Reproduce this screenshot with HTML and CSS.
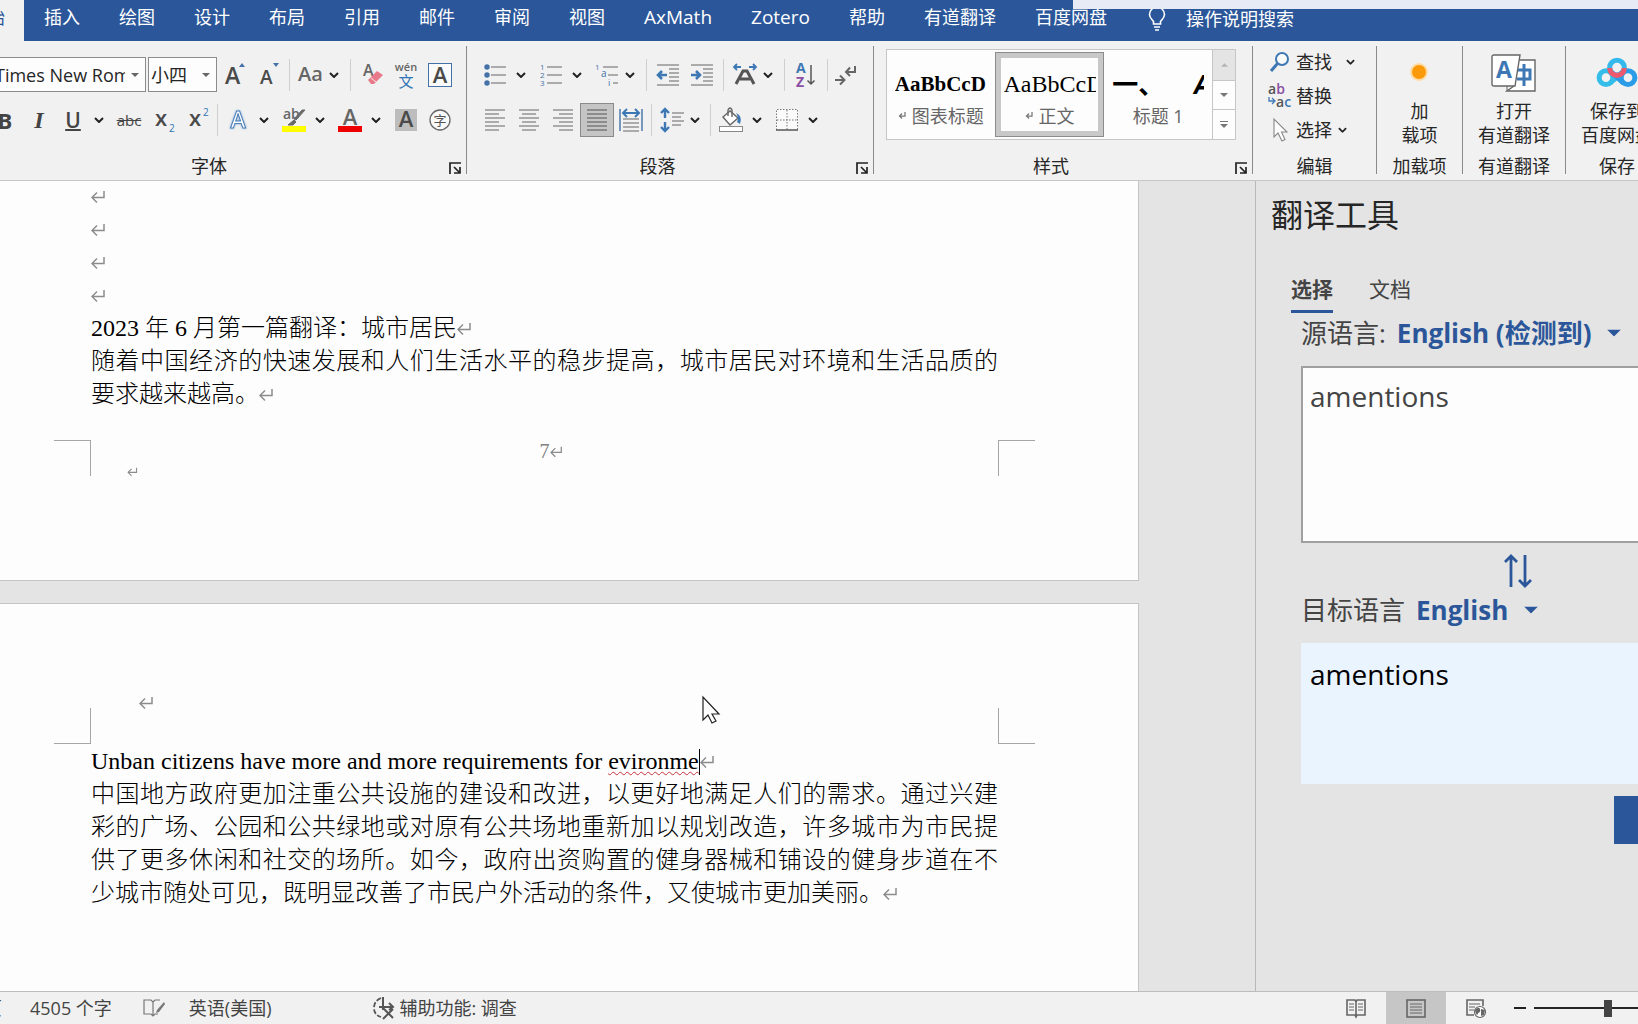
FILE: index.html
```html
<!DOCTYPE html>
<html lang="zh-CN">
<head>
<meta charset="utf-8">
<title>Word</title>
<link rel="stylesheet" href="styles.css">
</head>
<body>
<svg class="defs" aria-hidden="true">
  <symbol id="caret" viewBox="0 0 10 6"><path d="M1 1l4 4 4-4" fill="none" stroke="#222" stroke-width="2"/></symbol>
  <symbol id="tri" viewBox="0 0 8 4"><path d="M0 0h8L4 4z" fill="currentColor"/></symbol>
  <symbol id="ret" viewBox="0 0 16 14"><path d="M13 1v6.500H1M6 2.500L1 7.500 6 12.500" fill="none" stroke="#8c8c8c" stroke-width="1.500"/></symbol>
  <symbol id="launch" viewBox="0 0 12 12"><path d="M1 12V1h11M5 5l6 6M11 5v6H5" fill="none" stroke="#222" stroke-width="1.700"/></symbol>
</svg>

<header class="titlebar">
  <nav class="tabs">
    <a class="tab active" href="#">开始</a>
    <a class="tab" href="#">插入</a>
    <a class="tab" href="#">绘图</a>
    <a class="tab" href="#">设计</a>
    <a class="tab" href="#">布局</a>
    <a class="tab" href="#">引用</a>
    <a class="tab" href="#">邮件</a>
    <a class="tab" href="#">审阅</a>
    <a class="tab" href="#">视图</a>
    <a class="tab latin" href="#">AxMath</a>
    <a class="tab latin" href="#">Zotero</a>
    <a class="tab" href="#">帮助</a>
    <a class="tab" href="#">有道翻译</a>
    <a class="tab" href="#">百度网盘</a>
    <button class="tell-me" type="button">
      <svg width="18" height="24" viewBox="0 0 18 24"><path d="M5.500 17v-2.500C4 12.500 1.500 11 1.500 7.500a7.500 7.500 0 0 1 15 0c0 3.500-2.500 5-4 7V17zM6 20h6M7 23h4" fill="none" stroke="#fff" stroke-width="1.600"/></svg>
      <span>操作说明搜索</span>
    </button>
  </nav>
  <div class="overlay-strip"></div>
</header>

<section class="ribbon" aria-label="开始">
  <div class="group font-group">
    <div class="row row-top airy">
      <span class="combo font-name"><select aria-label="字体"><option>Times New Roman</option></select><svg class="tri" width="8" height="4"><use href="#tri"/></svg></span>
      <span class="combo font-size"><select aria-label="字号"><option>小四</option></select><svg class="tri" width="8" height="4"><use href="#tri"/></svg></span>
      <button class="tool" aria-label="增大字号"><svg width="26" height="24" viewBox="0 0 26 24"><text x="4" y="21" class="glyph" font-size="23">A</text><path d="M18 4l3-4 3 4z" fill="#4472a8"/></svg></button>
      <button class="tool" aria-label="减小字号"><svg width="26" height="24" viewBox="0 0 26 24"><text x="5" y="21" class="glyph" font-size="19">A</text><path d="M18 0h6l-3 4z" fill="#4472a8"/></svg></button>
      <span class="sep"></span>
      <button class="tool" aria-label="更改大小写"><svg width="28" height="24" viewBox="0 0 28 24"><text x="1" y="18" class="glyph soft" font-size="20">Aa</text></svg></button>
      <button class="drop tight" aria-label="更多"><svg width="10" height="6"><use href="#caret"/></svg></button>
      <span class="sep"></span>
      <button class="tool" aria-label="清除格式"><svg width="24" height="24" viewBox="0 0 24 24"><text x="3" y="13" class="glyph soft" font-size="16">A</text><path d="M8 17l9-9 6 4-9 9-3 0z" fill="#e8798a"/><path d="M10.500 14.500l5.500 4.500" stroke="#f1f1f1"/></svg></button>
      <button class="tool" aria-label="拼音指南"><svg width="26" height="30" viewBox="0 0 26 30"><text x="13" y="11" text-anchor="middle" class="glyph soft" font-size="11">wén</text><text x="13" y="27" text-anchor="middle" font-size="15" fill="#2f74b5">文</text></svg></button>
      <button class="tool" aria-label="字符边框"><svg width="24" height="24" viewBox="0 0 24 24"><rect x="0.500" y="0.500" width="23" height="23" fill="#fafafa" stroke="#4472a8"/><text x="12" y="20" text-anchor="middle" class="glyph" font-size="22">A</text></svg></button>
    </div>
    <div class="row row-bottom">
      <button class="tool bold" aria-label="加粗">B</button>
      <button class="tool italic" aria-label="倾斜">I</button>
      <button class="tool under" aria-label="下划线">U</button>
      <button class="drop" aria-label="更多"><svg width="10" height="6"><use href="#caret"/></svg></button>
      <button class="tool strike" aria-label="删除线">abc</button>
      <button class="tool" aria-label="下标"><svg width="24" height="28" viewBox="0 0 24 28"><text x="4" y="20" class="glyph" font-size="22">x</text><text x="18" y="26" font-size="10" fill="#2f74b5">2</text></svg></button>
      <button class="tool" aria-label="上标"><svg width="24" height="28" viewBox="0 0 24 28"><text x="4" y="20" class="glyph" font-size="22">x</text><text x="18" y="10" font-size="10" fill="#2f74b5">2</text></svg></button>
      <span class="sep"></span>
      <button class="tool" aria-label="文本效果"><svg width="24" height="26" viewBox="0 0 24 26"><text x="12" y="21" text-anchor="middle" font-size="23" font-weight="600" fill="#fff" stroke="#4a7fb8" class="glow">A</text></svg></button>
      <button class="drop" aria-label="更多"><svg width="10" height="6"><use href="#caret"/></svg></button>
      <button class="tool" aria-label="突出显示"><svg width="24" height="26" viewBox="0 0 24 26"><text x="1" y="12" class="glyph soft" font-size="14">ab</text><path d="M23 3l-9 10-2-1 8-9zM12 13l2 2-3 3H6z" fill="#6a6a6a" stroke="#6a6a6a"/><rect y="19" width="24" height="6" fill="#ffff00"/></svg></button>
      <button class="drop" aria-label="更多"><svg width="10" height="6"><use href="#caret"/></svg></button>
      <button class="tool" aria-label="字体颜色"><svg width="24" height="26" viewBox="0 0 24 26"><text x="12" y="18" text-anchor="middle" class="glyph soft" font-size="22">A</text><rect y="19" width="24" height="6" fill="#ee0000"/></svg></button>
      <button class="drop" aria-label="更多"><svg width="10" height="6"><use href="#caret"/></svg></button>
      <button class="tool" aria-label="字符底纹"><svg width="22" height="22" viewBox="0 0 22 22"><rect width="22" height="22" fill="#bdbdbd"/><text x="11" y="18" text-anchor="middle" class="glyph" font-size="22">A</text></svg></button>
      <button class="tool" aria-label="带圈字符"><svg width="22" height="22" viewBox="0 0 22 22"><circle cx="11" cy="11" r="10" fill="#fafafa" stroke="#666" stroke-width="1.300"/><text x="11" y="16" text-anchor="middle" font-size="13" fill="#555">字</text></svg></button>
    </div>
    <div class="group-foot"><span>字体</span><button class="launcher" aria-label="字体设置"><svg width="12" height="12"><use href="#launch"/></svg></button></div>
  </div>

  <div class="group para-group">
    <div class="row row-top airy">
      <button class="tool" aria-label="项目符号"><svg width="24" height="24" viewBox="0 0 24 24"><g fill="#4472a8"><circle cx="4" cy="4" r="2.700"/><circle cx="4" cy="12" r="2.700"/><circle cx="4" cy="20" r="2.700"/></g><path d="M8 4h15M8 12h15M8 20h15" stroke="#666" stroke-width="1.200"/></svg></button>
      <button class="drop" aria-label="更多"><svg width="10" height="6"><use href="#caret"/></svg></button>
      <button class="tool" aria-label="编号"><svg width="24" height="24" viewBox="0 0 24 24"><g fill="#4472a8" font-size="8"><text x="1" y="7">1</text><text x="1" y="15">2</text><text x="1" y="23">3</text></g><path d="M8 4h15M8 12h15M8 20h15" stroke="#666" stroke-width="1.200"/></svg></button>
      <button class="drop" aria-label="更多"><svg width="10" height="6"><use href="#caret"/></svg></button>
      <button class="tool" aria-label="多级列表"><svg width="24" height="24" viewBox="0 0 24 24"><g fill="#4472a8" font-size="8"><text x="0" y="7">1</text><text x="6" y="14" font-size="10">a</text><text x="13" y="23" font-size="9">i</text></g><path d="M8 4h15M13 12h10M18 20h5" stroke="#666" stroke-width="1.200"/></svg></button>
      <button class="drop tight" aria-label="更多"><svg width="10" height="6"><use href="#caret"/></svg></button>
      <span class="sep"></span>
      <button class="tool" aria-label="减少缩进"><svg width="24" height="24" viewBox="0 0 24 24"><path d="M1 2h22M13 6h10M13 10h10M13 14h10M13 18h10M1 22h22" stroke="#666" stroke-width="1.200"/><path d="M11 12H2M6 8l-4 4 4 4" fill="none" stroke="#3e78b4" stroke-width="2.600"/></svg></button>
      <button class="tool" aria-label="增加缩进"><svg width="24" height="24" viewBox="0 0 24 24"><path d="M1 2h22M13 6h10M13 10h10M13 14h10M13 18h10M1 22h22" stroke="#666" stroke-width="1.200"/><path d="M1 12h9M6 8l4 4-4 4" fill="none" stroke="#3e78b4" stroke-width="2.600"/></svg></button>
      <span class="sep"></span>
      <button class="tool" aria-label="中文版式"><svg width="24" height="24" viewBox="0 0 24 24"><path d="M8 4H2M4 1L1 4l3 3M16 4h6M20 1l3 3-3 3" fill="none" stroke="#3e78b4" stroke-width="1.800"/><path d="M3 21L10 8h4l7 13M7 16h10" fill="none" stroke="#555" stroke-width="3"/></svg></button>
      <button class="drop tight" aria-label="更多"><svg width="10" height="6"><use href="#caret"/></svg></button>
      <span class="sep"></span>
      <button class="tool" aria-label="排序"><svg width="24" height="28" viewBox="0 0 24 28"><text x="2" y="12" font-size="14" font-weight="700" fill="#3e78b4">A</text><text x="2" y="26" font-size="14" font-weight="700" fill="#8a4fa3">Z</text><path d="M17 4v19M13.500 19.500L17 23l3.500-3.500" fill="none" stroke="#555" stroke-width="1.500"/></svg></button>
      <span class="sep"></span>
      <button class="tool" aria-label="显示编辑标记"><svg width="24" height="24" viewBox="0 0 24 24"><path d="M18 3v6H9M13 4.500L9 9l4 4M-2 17h9M3 12.500L7.500 17 3 21.500" fill="none" stroke="#666" stroke-width="2"/></svg></button>
    </div>
    <div class="row row-bottom">
      <button class="tool" aria-label="左对齐"><svg width="22" height="22" viewBox="0 0 22 22"><path d="M1 1h20M1 5h14M1 9h20M1 13h14M1 17h20M1 21h14" stroke="#666" stroke-width="1.200"/></svg></button>
      <button class="tool" aria-label="居中"><svg width="22" height="22" viewBox="0 0 22 22"><path d="M1 1h20M4 5h14M1 9h20M4 13h14M1 17h20M4 21h14" stroke="#666" stroke-width="1.200"/></svg></button>
      <button class="tool" aria-label="右对齐"><svg width="22" height="22" viewBox="0 0 22 22"><path d="M1 1h20M7 5h14M1 9h20M7 13h14M1 17h20M7 21h14" stroke="#666" stroke-width="1.200"/></svg></button>
      <button class="tool pressed" aria-label="两端对齐" aria-pressed="true"><svg width="22" height="22" viewBox="0 0 22 22"><path d="M1 1h20M1 5h20M1 9h20M1 13h20M1 17h20M1 21h20" stroke="#555" stroke-width="1.200"/></svg></button>
      <button class="tool" aria-label="分散对齐"><svg width="24" height="24" viewBox="0 0 24 24"><path d="M1 1v22M23 1v22" stroke="#4472a8" stroke-width="1.400"/><path d="M4 11h16M4 15h16M4 19h16M4 23h16" stroke="#666" stroke-width="1.200"/><path d="M4 5h16M8 1L4 5l4 4M16 1l4 4-4 4" fill="none" stroke="#3e78b4" stroke-width="2"/></svg></button>
      <span class="sep"></span>
      <button class="tool" aria-label="行距"><svg width="24" height="24" viewBox="0 0 24 24"><path d="M5 1v9M1 5l4-4 4 4M5 14v9M1 19l4 4 4-4" fill="none" stroke="#3e78b4" stroke-width="2.400"/><path d="M12 5h12M12 9h9M12 13h12M12 17h9" stroke="#666" stroke-width="1.200"/></svg></button>
      <button class="drop tight" aria-label="更多"><svg width="10" height="6"><use href="#caret"/></svg></button>
      <span class="sep"></span>
      <button class="tool" aria-label="底纹"><svg width="26" height="26" viewBox="0 0 26 26"><path d="M5 10l7-6 8 7-8 7z" fill="#fff" stroke="#666" stroke-width="1.400"/><path d="M10 9V3q2-4 4 0v7" fill="none" stroke="#666" stroke-width="1.400"/><path d="M18 6q7 3 4 11l-3-2q2-5-1-9z" fill="#3e78b4"/><rect x="1.500" y="19.500" width="23" height="5" fill="#fff" stroke="#888"/></svg></button>
      <button class="drop" aria-label="更多"><svg width="10" height="6"><use href="#caret"/></svg></button>
      <button class="tool" aria-label="边框"><svg width="22" height="22" viewBox="0 0 22 22"><rect width="22" height="22" fill="#fafafa"/><path d="M.5 21V.5h21V21M11 1v20M1 11h20" fill="none" stroke="#777" stroke-dasharray="1.500 1.500"/><path d="M0 21h22" stroke="#555" stroke-width="1.500"/></svg></button>
      <button class="drop" aria-label="更多"><svg width="10" height="6"><use href="#caret"/></svg></button>
    </div>
    <div class="group-foot"><span>段落</span><button class="launcher" aria-label="段落设置"><svg width="12" height="12"><use href="#launch"/></svg></button></div>
  </div>

  <div class="group style-group">
    <div class="gallery">
      <button class="style-card"><span class="preview caption">AaBbCcD</span><span class="style-name"><svg width="8" height="9" viewBox="0 0 16 14"><path d="M14 0v8H3M8 3L3 8l5 5" fill="none" stroke="#777" stroke-width="2.500"/></svg>图表标题</span></button>
      <button class="style-card selected"><span class="preview">AaBbCcD</span><span class="style-name"><svg width="8" height="9" viewBox="0 0 16 14"><path d="M14 0v8H3M8 3L3 8l5 5" fill="none" stroke="#777" stroke-width="2.500"/></svg>正文</span></button>
      <button class="style-card"><span class="preview heading"><span>一、</span><i>A</i></span><span class="style-name">标题 1</span></button>
      <div class="gallery-scroll">
        <button disabled aria-label="上一行"><svg width="7" height="4" viewBox="0 0 8 4"><path d="M0 4h8L4 0z" fill="#b5b5b5"/></svg></button>
        <button aria-label="下一行"><svg width="8" height="4"><use href="#tri"/></svg></button>
        <button aria-label="其他"><svg width="8" height="8" viewBox="0 0 8 8"><path d="M0 .5h8" stroke="#777"/><path d="M0 3h8L4 7z" fill="#777"/></svg></button>
      </div>
    </div>
    <div class="group-foot"><span>样式</span><button class="launcher" aria-label="样式设置"><svg width="12" height="12"><use href="#launch"/></svg></button></div>
  </div>

  <div class="group edit-group">
    <div class="edit-list">
      <button><svg width="22" height="22" viewBox="0 0 22 22"><circle cx="13" cy="8" r="6" fill="#fafafa" stroke="#3e78b4" stroke-width="2"/><path d="M9 12l-7 8" stroke="#3e78b4" stroke-width="3"/></svg><span>查找</span><svg class="far" width="9" height="6" viewBox="0 0 10 6"><use href="#caret"/></svg></button>
      <button><svg width="24" height="26" viewBox="0 0 24 26"><text y="11" font-size="14" font-weight="600" fill="#555">a<tspan fill="#8a4fa3">b</tspan></text><text x="8" y="24" font-size="14" font-weight="600" fill="#555">a<tspan fill="#3e78b4">c</tspan></text><path d="M1 14v4h5M4 15l3 3-3 3" fill="none" stroke="#3e78b4" stroke-width="1.300"/></svg><span>替换</span></button>
      <button><svg width="22" height="24" viewBox="0 0 22 24"><path d="M5 1v18l4-4 4 8 3-1.500-3.500-7.500H18z" fill="#fdfdfd" stroke="#888" stroke-width="1.100"/></svg><span>选择</span><svg width="9" height="6" viewBox="0 0 10 6"><use href="#caret"/></svg></button>
    </div>
    <div class="group-foot"><span>编辑</span></div>
  </div>

  <div class="group addin-group">
    <button class="big"><svg width="48" height="40" viewBox="0 0 48 40"><circle cx="23" cy="18" r="9" fill="#ffdca6"/><circle cx="23" cy="18" r="7" fill="#fb9a09"/></svg><span>加<br>载项</span></button>
    <div class="group-foot"><span>加载项</span></div>
  </div>
  <div class="group youdao-group">
    <button class="big"><svg width="48" height="40" viewBox="0 0 48 40"><path d="M28 6h17v31H17l7-5" fill="#fff" stroke="#666" stroke-width="1.400"/><path d="M17 37v-5" stroke="#666"/><path d="M4 1h26l-5 31H4q-2 0-2-2V3q0-2 2-2z" fill="#fff" stroke="#666" stroke-width="1.400"/><text x="6" y="24" font-size="23" font-weight="700" fill="#3e78b4">A</text><path d="M34 10v22M28 16h12v9H27" fill="none" stroke="#3e78b4" stroke-width="3"/></svg><span>打开<br>有道翻译</span></button>
    <div class="group-foot"><span>有道翻译</span></div>
  </div>
  <div class="group baidu-group">
    <button class="big"><svg width="48" height="40" viewBox="0 0 48 40"><g fill="none" stroke-width="5.500"><circle cx="12" cy="24" r="7.500" stroke="#35bdea"/><circle cx="36" cy="24" r="7.500" stroke="#2a9ce8"/><path d="M17 29.500l14-12.500" stroke="#35bdea"/><path d="M17 17l14 13" stroke="#2a9ce8"/><circle cx="24" cy="13" r="8" stroke="#35b8ec"/><path d="M16 13.500a8 8 0 0 0 16 0" stroke="#ee5a6c"/></g></svg><span>保存到<br>百度网盘</span></button>
    <div class="group-foot"><span>保存</span></div>
  </div>
</section>

<main class="workspace">
  <div class="canvas">
    <article class="page page-end">
      <div class="body-text">
        <p><svg class="ret" width="16" height="14"><use href="#ret"/></svg></p>
        <p><svg class="ret" width="16" height="14"><use href="#ret"/></svg></p>
        <p><svg class="ret" width="16" height="14"><use href="#ret"/></svg></p>
        <p><svg class="ret" width="16" height="14"><use href="#ret"/></svg></p>
        <p>2023 年 6 月第一篇翻译：城市居民<svg class="ret" width="16" height="14"><use href="#ret"/></svg></p>
        <p class="full">随着中国经济的快速发展和人们生活水平的稳步提高，城市居民对环境和生活品质的</p>
        <p>要求越来越高。<svg class="ret" width="16" height="14"><use href="#ret"/></svg></p>
      </div>
      <footer class="margin-row">
        <span class="corner top-right"></span>
        <div class="foot-text">
          <p class="page-no">7<svg class="ret" width="14" height="12" viewBox="0 0 16 14"><use href="#ret"/></svg></p>
          <p class="foot-mark"><svg width="12" height="10" viewBox="0 0 16 14"><use href="#ret"/></svg></p>
        </div>
        <span class="corner top-left"></span>
      </footer>
    </article>
    <article class="page page-start">
      <header class="margin-row">
        <span class="corner bottom-right"></span>
        <p class="head-mark"><svg width="16" height="14"><use href="#ret"/></svg></p>
        <span class="corner bottom-left"></span>
      </header>
      <div class="body-text">
        <p>Unban citizens have more and more requirements for <span class="typo">evironme</span><span class="text-caret"></span><svg class="ret" width="16" height="14"><use href="#ret"/></svg></p>
        <p class="full">中国地方政府更加注重公共设施的建设和改进，以更好地满足人们的需求。通过兴建</p>
        <p class="full">彩的广场、公园和公共绿地或对原有公共场地重新加以规划改造，许多城市为市民提</p>
        <p class="full">供了更多休闲和社交的场所。如今，政府出资购置的健身器械和铺设的健身步道在不</p>
        <p>少城市随处可见，既明显改善了市民户外活动的条件，又使城市更加美丽。<svg class="ret" width="16" height="14"><use href="#ret"/></svg></p>
      </div>
    </article>
    <svg class="pointer" width="20" height="28" viewBox="0 0 20 28"><path d="M1 1v23l5-5 4 8 4-2-4-7h7z" fill="#fff" stroke="#222" stroke-width="1.200"/></svg>
  </div>

  <aside class="pane">
    <h2>翻译工具</h2>
    <div class="pane-tabs">
      <button class="pane-tab current">选择</button>
      <button class="pane-tab">文档</button>
    </div>
    <div class="pane-body">
      <div class="lang"><label for="src">源语言:</label><button class="lang-pick">English (检测到)<svg width="14" height="8" viewBox="0 0 8 4"><use href="#tri"/></svg></button></div>
      <textarea id="src">amentions</textarea>
      <button class="swap" aria-label="交换语言"><svg width="28" height="34" viewBox="0 0 28 34"><path d="M7 33V2M1 8l6-6 6 6M21 1v31M15 26l6 6 6-6" fill="none" stroke="#2b579a" stroke-width="2.800"/></svg></button>
      <div class="lang"><label for="dst">目标语言</label><button class="lang-pick">English<svg width="14" height="8" viewBox="0 0 8 4"><use href="#tri"/></svg></button></div>
      <output id="dst">amentions</output>
      <button class="insert" aria-label="插入"></button>
    </div>
  </aside>
</main>

<footer class="status">
  <div class="status-left">
    <span class="page-count">页</span>
    <span class="word-count">4505 个字</span>
    <svg class="proof" width="22" height="20" viewBox="0 0 22 20"><path d="M10 4L8 2H1v14h7l2 2 2-2h3M10 4v14M10 4l2-2h5" fill="none" stroke="#777" stroke-width="1.200"/><path d="M21 4l-7 8-1 3 3-1 6-8z" fill="#777"/></svg>
    <span class="language">英语(美国)</span>
    <svg width="22" height="24" viewBox="0 0 22 24"><path d="M8 2Q1 5 1 12t7 9" fill="none" stroke="#555" stroke-width="1.800" stroke-dasharray="5 2"/><path d="M6 11h14M10 1v13M16 7l4 4-4 3M9 11l11 11M20 13L10 23" fill="none" stroke="#555" stroke-width="2"/></svg>
    <span class="access">辅助功能: 调查</span>
  </div>
  <div class="status-right">
    <button aria-label="阅读视图"><svg width="20" height="19" viewBox="0 0 20 19"><path d="M10 3L9 1H1v15h8l1 2 1-2h8V1h-8zM10 3v15" fill="none" stroke="#666" stroke-width="1.600"/><path d="M3 5h5M3 8h5M3 11h5M12 5h5M12 8h5M12 11h5" stroke="#666"/></svg></button>
    <button class="on" aria-label="页面视图"><svg width="20" height="19" viewBox="0 0 20 19"><rect x="1" y="1" width="18" height="17" fill="none" stroke="#666" stroke-width="1.600"/><path d="M4 5h12M4 8h12M4 11h12M4 14h12" stroke="#666" stroke-width="1.200"/></svg></button>
    <button aria-label="Web 视图"><svg width="20" height="19" viewBox="0 0 20 19"><path d="M8 16H1V1h16v6" fill="none" stroke="#666" stroke-width="1.600"/><path d="M3 5h11M3 8h6M3 11h5" stroke="#666" stroke-width="1.200"/><circle cx="14" cy="13" r="5.500" fill="#fff" stroke="#666" stroke-width="1.200"/><path d="M9 11q4-4 5-1t-2 4q0 3-2 1zM15 10l4 1-1 5-3 1z" fill="#666"/></svg></button>
    <button class="zoom-out" aria-label="缩小"><svg width="12" height="2"><path d="M0 1h12" stroke="#222" stroke-width="2"/></svg></button>
    <input type="range" min="0" max="200" value="100" aria-label="缩放">
  </div>
</footer>
</body>
</html>
```

FILE: styles.css
```css
* {
  box-sizing: border-box;
}

body {
  margin: 0;
  height: 100vh;
  display: flex;
  flex-direction: column;
  overflow: hidden;
  background: #f1f1f1;
  color: #262626;
  font: 18px/24px "Open Sans", "Noto Sans CJK SC", sans-serif;
}

button {
  padding: 0;
  border: 0;
  background: none;
  color: inherit;
  font: inherit;
  white-space: nowrap;
}

p,
h2 {
  margin: 0;
}

svg {
  flex: none;
  overflow: visible;
}

.defs {
  position: absolute;
  width: 0;
  height: 0;
}

/* Ribbon tabs */
.titlebar {
  position: relative;
  flex: none;
  height: 41px;
  background: #2b579a;
}

.tabs {
  display: flex;
  gap: 39px;
  height: 100%;
  margin-left: -50px;
}

.tab {
  flex: none;
  padding-top: 5px;
  color: #fff;
  text-decoration: none;
}

.tab.active {
  margin-right: -19px;
  padding-left: 19px;
  padding-right: 19px;
  background: #f1f1f1;
  color: #2b579a;
}

.tab.latin {
  font-size: 19px;
}

.tell-me {
  display: flex;
  align-items: center;
  gap: 20px;
  padding: 0 2px 4px;
  color: #fff;
}

.overlay-strip {
  position: absolute;
  top: 0;
  right: 0;
  width: 565px;
  height: 9px;
  background: #e6ebf5;
}

/* Ribbon */
.ribbon {
  flex: none;
  display: flex;
  height: 140px;
  padding: 5px 0 6px;
  border-bottom: 1px solid #c6c6c6;
}

.group {
  flex: none;
  display: flex;
  flex-direction: column;
  border-right: 1px solid #8a8a8a;
}

.font-group {
  width: 487px;
  margin-left: -20px;
  padding-left: 8px;
}

.para-group {
  width: 407px;
  padding-left: 11px;
}

.style-group {
  width: 379px;
  padding-left: 12px;
}

.edit-group {
  width: 124px;
}

.addin-group {
  width: 86px;
}

.youdao-group,
.baidu-group {
  width: 103px;
}

.row {
  display: flex;
  align-items: center;
}

.row-top {
  height: 35px;
  margin: 11px 0;
}

.row-bottom {
  height: 34px;
}

.sep {
  flex: none;
  width: 1px;
  height: 32px;
  margin: 0 3px;
  background: #cfcfcf;
}

.airy .sep {
  margin: 0 4px;
}

.tool,
.drop {
  flex: none;
  display: flex;
  align-items: center;
  justify-content: center;
  width: 34px;
  height: 34px;
  color: #444;
}

.drop {
  width: 22px;
  padding-right: 4px;
}

.drop.tight {
  width: 18px;
  padding-right: 6px;
}

.pressed {
  border: 1px solid #8a8a8a;
  background: #c5c5c5;
}

.glyph {
  fill: #4a4a4a;
  font-weight: 600;
}

.glyph.soft {
  fill: #666;
}

.glow {
  filter: drop-shadow(0 0 1px #7fa9d6);
}

.bold {
  font-size: 22px;
  font-weight: 700;
}

.italic {
  font: italic 700 24px "Liberation Serif", serif;
}

.under {
  font-size: 21px;
  font-weight: 600;
  text-decoration: underline;
  text-decoration-thickness: 2px;
}

.strike {
  font-size: 15px;
  text-decoration: line-through;
}

.combo {
  position: relative;
  flex: none;
  height: 35px;
}

.combo select {
  width: 100%;
  height: 100%;
  padding: 0 20px 0 6px;
  border: 1px solid #8c8c8c;
  border-radius: 0;
  appearance: none;
  background: #fdfdfd;
  color: #262626;
  font: inherit;
  text-overflow: clip;
}

.combo .tri {
  position: absolute;
  top: 16px;
  right: 7px;
  color: #666;
}

.font-name {
  width: 158px;
}

.font-size {
  width: 69px;
  margin-left: 2px;
}

.font-size select {
  padding-left: 2px;
}

.group-foot {
  display: flex;
  align-items: center;
  height: 16px;
  margin-top: auto;
}

.group-foot span {
  flex: 1;
  text-align: center;
  white-space: nowrap;
}

.launcher {
  display: flex;
  justify-content: flex-end;
  width: 36px;
  padding: 4px 5px 0 0;
}

/* Style gallery */
.gallery {
  display: flex;
  width: 350px;
  height: 91px;
  margin-top: 3px;
  border: 1px solid #c6c6c6;
  background: #fdfdfd;
}

.style-card {
  flex: 1;
  display: flex;
  flex-direction: column;
  align-items: center;
  justify-content: center;
  gap: 4px;
  min-width: 0;
  margin: 2px 0;
  padding-top: 6px;
}

.style-card.selected {
  border: 1px solid #8c8c8c;
  outline: 5px solid #c8c8c8;
  outline-offset: -6px;
}

.preview {
  width: 92px;
  height: 32px;
  overflow: hidden;
  color: #000;
  font: 24px/32px "Liberation Serif", "Noto Sans CJK SC", serif;
  text-align: left;
}

.preview.caption {
  font-size: 21px;
  font-weight: 700;
}

.preview.heading {
  display: flex;
  gap: 30px;
  font: 700 26px/32px "Open Sans", "Noto Sans CJK SC", sans-serif;
}

.style-name {
  display: flex;
  align-items: center;
  gap: 6px;
  color: #666;
}

.gallery-scroll {
  display: grid;
  grid-template-rows: 1fr 1fr 1fr;
  width: 23px;
  border-left: 1px solid #c6c6c6;
}

.gallery-scroll button {
  display: flex;
  align-items: center;
  justify-content: center;
  color: #777;
}

.gallery-scroll button + button {
  border-top: 1px solid #c6c6c6;
}

.gallery-scroll button:disabled {
  background: #e4e4e4;
}

.edit-list {
  display: flex;
  flex-direction: column;
  gap: 10px;
  padding: 4px 0 0 15px;
}

.edit-list button {
  display: flex;
  align-items: center;
  height: 24px;
}

.edit-list span {
  margin: 0 6px 0 4px;
}

.edit-list svg:first-child {
  width: 24px;
}

.edit-list .far {
  margin-left: 8px;
}

.big {
  display: flex;
  flex-direction: column;
  align-items: center;
  gap: 5px;
  margin-top: 8px;
}

.baidu-group .big svg {
  width: 44px;
}

/* Document */
.workspace {
  flex: 1;
  display: flex;
  min-height: 0;
  background: #e4e4e4;
}

.canvas {
  position: relative;
  flex: 1;
  min-width: 0;
  overflow: hidden;
}

.page {
  width: 1139px;
  padding-left: 54px;
  border-right: 1px solid #c4c4c4;
  background: #fdfdfd;
}

.page-end {
  height: 400px;
  margin-bottom: 22px;
  border-bottom: 1px solid #c4c4c4;
}

.page-start {
  height: 400px;
  padding-top: 87px;
  border-top: 1px solid #c4c4c4;
}

.body-text {
  width: 907px;
  margin-top: -1px;
  margin-left: 37px;
  color: #000;
  font: 300 24px/33px "Liberation Serif", "Noto Sans CJK SC", serif;
}

.body-text p {
  height: 33px;
  white-space: nowrap;
}

.body-text .full {
  text-align: justify;
  text-align-last: justify;
  white-space: normal;
}

.ret {
  vertical-align: 0;
}

.typo {
  text-decoration: underline wavy #c8323c 1px;
  text-underline-offset: 2px;
}

.text-caret {
  display: inline-block;
  width: 1px;
  height: 26px;
  background: #000;
  vertical-align: -6px;
}

.margin-row {
  display: flex;
}

.page-end {
  display: flow-root;
}

.page-end .margin-row {
  padding-top: 29px;
}

.page-start .margin-row {
  padding-bottom: 2px;
}

.corner {
  flex: none;
  width: 37px;
  height: 36px;
}

.top-right {
  border-top: 1px solid #a6a6a6;
  border-right: 1px solid #a6a6a6;
}

.top-left {
  border-top: 1px solid #a6a6a6;
  border-left: 1px solid #a6a6a6;
}

.bottom-right {
  align-self: flex-end;
  border-bottom: 1px solid #a6a6a6;
  border-right: 1px solid #a6a6a6;
}

.bottom-left {
  align-self: flex-end;
  border-bottom: 1px solid #a6a6a6;
  border-left: 1px solid #a6a6a6;
}

.foot-text,
.head-mark {
  flex: none;
  width: 907px;
}

.page-no {
  padding-top: 1px;
  padding-left: 14px;
  color: #808080;
  font: 20px/20px "Liberation Serif", serif;
  text-align: center;
}

.foot-mark {
  padding-left: 36px;
  line-height: 18px;
}

.head-mark {
  height: 53px;
  padding-left: 48px;
}

.pointer {
  position: absolute;
  top: 515px;
  left: 702px;
}

/* Translator pane */
.pane {
  flex: none;
  width: 383px;
  padding: 12px 0 0 15px;
  overflow: hidden;
  border-left: 1px solid #b8b8b8;
}

.pane h2 {
  font-size: 32px;
  font-weight: 400;
  line-height: 44px;
}

.pane-tabs {
  display: flex;
  gap: 36px;
  margin: 37px 0 2px 20px;
  color: #444;
  font-size: 21px;
  line-height: 30px;
}

.pane-tab {
  padding-bottom: 6px;
  border-bottom: 3px solid transparent;
}

.pane-tab.current {
  border-color: #2b579a;
  font-weight: 700;
}

.pane-body {
  display: flex;
  flex-direction: column;
  width: 434px;
  margin-left: 30px;
}

.lang {
  display: flex;
  align-items: center;
  gap: 11px;
  height: 36px;
  color: #444;
  font-size: 26px;
}

.lang-pick {
  display: flex;
  align-items: center;
  gap: 16px;
  color: #2b579a;
  font-weight: 700;
}

.pane-body textarea {
  height: 177px;
  margin-top: 15px;
  padding: 10px 7px;
  border: 2px solid #a0a0a0;
  background: #fdfdfd;
  color: #444;
  font: 28px/36px "Open Sans", sans-serif;
  resize: none;
}

.swap {
  display: flex;
  justify-content: center;
  margin: 11px 0 4px;
}

.pane-body output {
  height: 141px;
  margin-top: 15px;
  padding: 13px 9px;
  background: #eaf4fe;
  color: #000;
  font: 28px/36px "Open Sans", sans-serif;
}

.insert {
  align-self: flex-end;
  width: 121px;
  height: 48px;
  margin-top: 12px;
  background: #2b579a;
}

/* Status bar */
.status {
  flex: none;
  display: flex;
  justify-content: space-between;
  height: 33px;
  border-top: 1px solid #bdbdbd;
  background: #f1f1f1;
  color: #444;
}

.status-left {
  display: flex;
  align-items: center;
  white-space: nowrap;
}

.page-count {
  margin: 0 28px 0 -16px;
}

.proof {
  margin: 0 24px 0 31px;
}

.language {
  margin-right: 102px;
}

.access {
  margin-left: 4px;
}

.status-right {
  display: flex;
  align-items: center;
  margin-right: -44px;
}

.status-right button {
  display: flex;
  align-items: center;
  justify-content: center;
  width: 60px;
  height: 32px;
}

.status-right .on {
  background: #c6c6c6;
}

.status-right .zoom-out {
  width: 28px;
}

.status-right input {
  width: 148px;
  height: 18px;
  margin: 0;
  appearance: none;
  background: linear-gradient(#262626, #262626) center / 100% 2px no-repeat;
}

.status-right input::-webkit-slider-thumb {
  width: 8px;
  height: 17px;
  appearance: none;
  background: #444;
}
```
